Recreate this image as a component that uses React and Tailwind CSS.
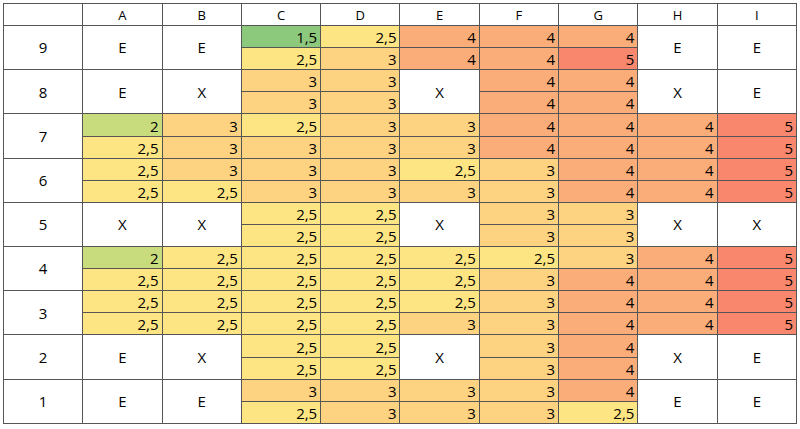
import React from "react";

const COLS = ["A", "B", "C", "D", "E", "F", "G", "H", "I"];

// each entry: string => merged white cell; array => [top, bottom]
const DATA = [
  ["9", ["E", "E", [1.5, 2.5], [2.5, 3], [4, 4], [4, 4], [4, 5], "E", "E"]],
  ["8", ["E", "X", [3, 3], [3, 3], "X", [4, 4], [4, 4], "X", "E"]],
  ["7", [[2, 2.5], [3, 3], [2.5, 3], [3, 3], [3, 3], [4, 4], [4, 4], [4, 4], [5, 5]]],
  ["6", [[2.5, 2.5], [3, 2.5], [3, 3], [3, 3], [2.5, 3], [3, 3], [4, 4], [4, 4], [5, 5]]],
  ["5", ["X", "X", [2.5, 2.5], [2.5, 2.5], "X", [3, 3], [3, 3], "X", "X"]],
  ["4", [[2, 2.5], [2.5, 2.5], [2.5, 2.5], [2.5, 2.5], [2.5, 2.5], [2.5, 3], [3, 4], [4, 4], [5, 5]]],
  ["3", [[2.5, 2.5], [2.5, 2.5], [2.5, 2.5], [2.5, 2.5], [2.5, 3], [3, 3], [4, 4], [4, 4], [5, 5]]],
  ["2", ["E", "X", [2.5, 2.5], [2.5, 2.5], "X", [3, 3], [4, 4], "X", "E"]],
  ["1", ["E", "E", [3, 2.5], [3, 3], [3, 3], [3, 3], [4, 2.5], "E", "E"]],
];

const BG = {
  1.5: "bg-[#8dc97c]",
  2: "bg-[#c8dc7d]",
  2.5: "bg-[#fee583]",
  3: "bg-[#fdd381]",
  4: "bg-[#fbad79]",
  5: "bg-[#f8876e]",
};

const fmt = (v) => String(v).replace(".", ",");

function NumCell({ v }) {
  return (
    <div
      className={`${BG[v]} flex items-end justify-end pr-[3px] pb-[1px] text-[15px] leading-[18px] text-black`}
    >
      {fmt(v)}
    </div>
  );
}

export default function App() {
  const cells = [];
  cells.push(<div key="h0" className="bg-white" />);
  COLS.forEach((c) =>
    cells.push(
      <div
        key={"h" + c}
        className="bg-white flex items-center justify-center pt-[2px] text-[13px] text-black"
      >
        {c}
      </div>
    )
  );
  DATA.forEach(([label, row]) => {
    cells.push(
      <div
        key={label + "l"}
        className="row-span-2 bg-white flex items-center justify-center text-[15px] text-black"
      >
        {label}
      </div>
    );
    row.forEach((v, i) => {
      if (typeof v === "string") {
        cells.push(
          <div
            key={label + i + "m"}
            className="row-span-2 bg-white flex items-center justify-center text-[15px] text-black"
          >
            {v}
          </div>
        );
      } else {
        cells.push(<NumCell key={label + i + "t"} v={v[0]} />);
      }
    });
    row.forEach((v, i) => {
      if (typeof v !== "string") {
        cells.push(<NumCell key={label + i + "b"} v={v[1]} />);
      }
    });
  });

  return (
    <div
      className="w-[800px] h-[429px] bg-white overflow-hidden pl-[3px] pt-[3px]"
      style={{ fontFamily: '"Open Sans", "Noto Sans", sans-serif' }}
    >
      <div className="grid w-fit grid-cols-[repeat(10,78.3px)] grid-rows-[repeat(19,21.1px)] gap-px border border-[#555555] bg-[#555555]">
        {cells}
      </div>
    </div>
  );
}
